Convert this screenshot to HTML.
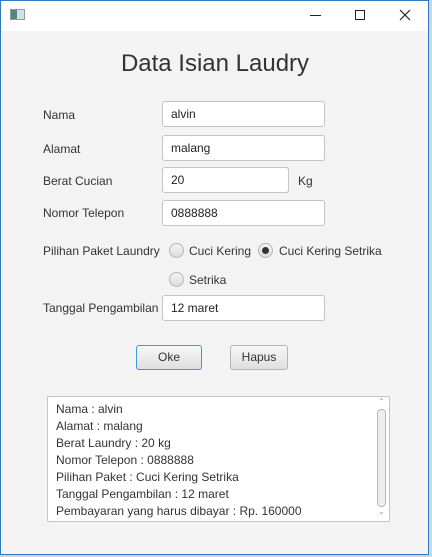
<!DOCTYPE html>
<html><head><style>
*{box-sizing:border-box;margin:0;padding:0}
body{width:432px;height:557px;background:#cfd6de;position:relative;overflow:hidden;font-family:"Liberation Sans",sans-serif;font-size:12px;color:#333}
.win{position:absolute;left:0;top:0;width:429px;height:555px;background:#f3f3f3}
.bd{position:absolute;left:0;top:0;width:429px;height:555px;border:1px solid #2b79c4}
.tb{position:absolute;left:0;top:0;width:429px;height:31px;background:#fff}
.a{position:absolute;white-space:nowrap}
.in{position:absolute;left:162px;width:163px;height:26px;background:#fff;border:1px solid #c4c4c4;border-radius:3px;padding:0 0 0 8px;line-height:24px;font-size:12px;color:#222}
.rd{position:absolute;width:15px;height:15px;border-radius:50%;border:1px solid #b5b5b5;background:linear-gradient(#f5f5f5,#dcdcdc)}
.btn{position:absolute;height:25px;border:1px solid #b5b5b5;border-radius:3px;background:linear-gradient(#f8f8f8,#dedede);text-align:center;line-height:23px}
.ta{position:absolute;left:47px;top:396px;width:343px;height:126px;background:#fff;border:1px solid #c4c4c4;border-radius:2px}
.ta div{position:absolute;left:8px;font-size:12px;color:#333}
</style></head><body>
<div class="win">
<div class="tb">
<div class="a" style="left:10px;top:9px;width:15px;height:11px;border:1px solid #999;background:linear-gradient(90deg,#4a8a80 0 45%,#d0e0e8 45%)"></div>
<div class="a" style="left:310px;top:15px;width:11px;height:1px;background:#222"></div>
<div class="a" style="left:355px;top:10px;width:10px;height:10px;border:1px solid #222"></div>
<svg class="a" style="left:399px;top:9px" width="12" height="12"><path d="M1 1L11 11M11 1L1 11" stroke="#222" stroke-width="1.2"/></svg>
</div>
<div class="a" style="left:0;width:430px;top:50px;text-align:center;font-size:24px;color:#333">Data Isian Laudry</div>
<div class="a" style="left:43px;top:108px">Nama</div>
<div class="in" style="top:101px">alvin</div>
<div class="a" style="left:43px;top:142px">Alamat</div>
<div class="in" style="top:135px">malang</div>
<div class="a" style="left:43px;top:174px">Berat Cucian</div>
<div class="in" style="top:167px;width:127px">20</div>
<div class="a" style="left:298px;top:174px">Kg</div>
<div class="a" style="left:43px;top:206px">Nomor Telepon</div>
<div class="in" style="top:200px">0888888</div>
<div class="a" style="left:43px;top:244px">Pilihan Paket Laundry</div>
<div class="rd" style="left:169px;top:243px"></div>
<div class="a" style="left:189px;top:244px">Cuci Kering</div>
<div class="rd" style="left:258px;top:243px"><div style="position:absolute;left:3px;top:3px;width:7px;height:7px;border-radius:50%;background:#333"></div></div>
<div class="a" style="left:279px;top:244px">Cuci Kering Setrika</div>
<div class="rd" style="left:169px;top:272px"></div>
<div class="a" style="left:189px;top:273px">Setrika</div>
<div class="a" style="left:43px;top:301px">Tanggal Pengambilan</div>
<div class="in" style="top:295px">12 maret</div>
<div class="btn" style="left:136px;top:345px;width:66px;border-color:#3c9ad6">Oke</div>
<div class="btn" style="left:230px;top:345px;width:58px">Hapus</div>
<div class="ta">
<div style="top:5px">Nama : alvin</div>
<div style="top:22px">Alamat : malang</div>
<div style="top:39px">Berat Laundry : 20 kg</div>
<div style="top:56px">Nomor Telepon : 0888888</div>
<div style="top:73px">Pilihan Paket : Cuci Kering Setrika</div>
<div style="top:90px">Tanggal Pengambilan : 12 maret</div>
<div style="top:107px">Pembayaran yang harus dibayar : Rp. 160000</div>
<div style="left:329px;top:12px;width:9px;height:98px;border:1px solid #bbb;border-radius:4px;background:#eee"></div>
<div style="left:330px;top:0;font-size:8px;color:#999">&#8963;</div>
<div style="left:330px;top:110px;font-size:8px;color:#999">&#8964;</div>
</div>
</div>
<div class="bd"></div>
</body></html>
